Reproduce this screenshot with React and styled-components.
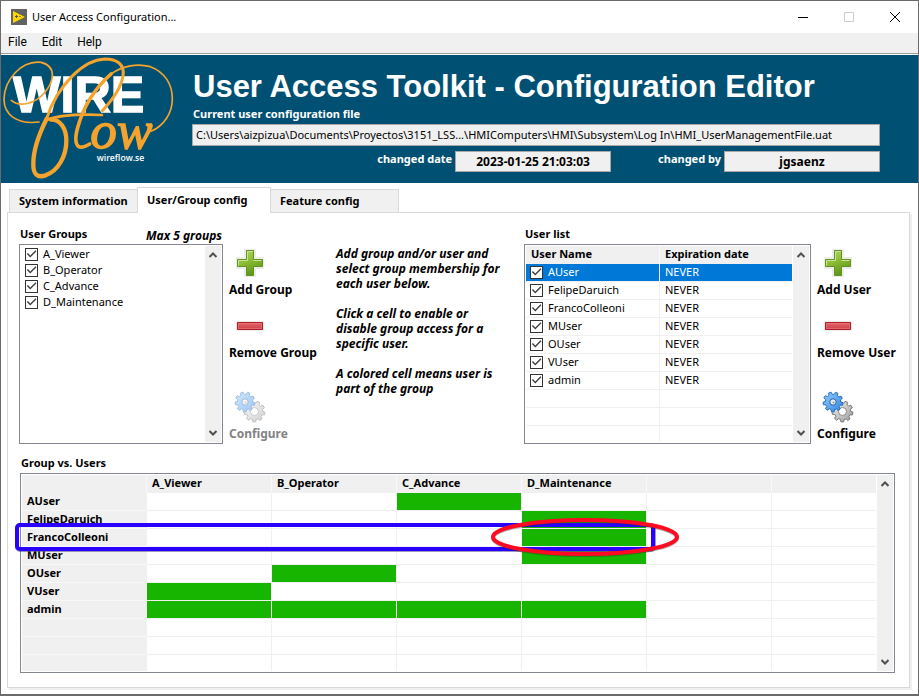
import React, { useState } from "react";
import styled, { createGlobalStyle, css } from "styled-components";

const Global = createGlobalStyle`
  *, *::before, *::after { box-sizing: border-box; }
  body {
    margin: 0;
    background: #ffffff;
    color: #000000;
    font-family: "Noto Sans", "Open Sans", sans-serif;
    font-size: 11px;
    line-height: 16px;
  }
  button, input { font: inherit; color: inherit; }
`;

const Window = styled.div`
  display: flex;
  flex-direction: column;
  min-height: 100vh;
  border: 1px solid #6b6b6b;
  border-bottom-width: 2px;
  background: #ffffff;
`;

const TitleBar = styled.header`
  display: flex;
  align-items: center;
  height: 32px;
  padding-left: 10px;
  gap: 5px;
`;

const WindowTitle = styled.h1`
  flex: 1;
  margin: 0;
  font-size: 11px;
  font-weight: 400;
`;

const WindowControls = styled.div`
  display: flex;
`;

const WindowButton = styled.button`
  width: 46px;
  height: 31px;
  padding: 0;
  border: 0;
  background: none;
  display: grid;
  place-items: center;
`;

const MenuBar = styled.nav`
  display: flex;
  gap: 1px;
  height: 21px;
  background: #f0f0f0;
  border-bottom: 1px solid #a0a0a0;
  margin-bottom: 1px;
`;

const MenuItem = styled.button`
  padding: 0 7px 2px;
  border: 0;
  background: none;
  font-size: 12px;
  font-family: Roboto, "Open Sans", sans-serif;
`;

const Banner = styled.section`
  display: flex;
  height: 128px;
  gap: 11px;
  padding-right: 38px;
  background: #005073;
  color: #ffffff;
`;

const BannerBody = styled.div`
  flex: 1;
  min-width: 0;
`;

const BannerTitle = styled.h2`
  margin: 14px 0 2px 1px;
  font: bold 31px/35px "Liberation Sans", Arial, sans-serif;
  white-space: nowrap;
`;

const BannerLabel = styled.label`
  display: block;
  padding-left: 1px;
  font-weight: 700;
`;

const Readout = styled.input`
  width: ${(p) => (p.$narrow ? "156px" : "100%")};
  height: ${(p) => (p.$narrow ? "21px" : "22px")};
  padding: 0 3px 1px;
  border: 1px solid #a7a7a7;
  background: #f0f0f0;
  color: #000000;
  ${(p) => p.$narrow && css`
    font-weight: 700;
    font-size: 12px;
    text-align: center;
  `}
`;

const PathLine = styled.div`
  margin-top: 2px;
  height: 27px;
`;

const ChangeLine = styled.div`
  display: flex;
  justify-content: flex-end;
  gap: 46px;
`;

const ChangeField = styled.div`
  display: flex;
  gap: 3px;
`;

const Tabs = styled.div`
  display: flex;
  align-items: flex-end;
  height: 29px;
  padding-left: 8px;
`;

const Tab = styled.button`
  height: 23px;
  width: 129px;
  padding: 0 9px;
  border: 1px solid #d9d9d9;
  border-bottom: 0;
  background: #f0f0f0;
  font-weight: 700;
  text-align: left;
  white-space: nowrap;
  ${(p) => p.$active && css`
    position: relative;
    width: 134px;
    height: 26px;
    margin: 0 -1px -1px;
    padding-bottom: 2px;
    background: #ffffff;
  `}
`;

const TabPanel = styled.main`
  flex: 1;
  margin: 0 8px 6px 6px;
  padding: 13px 14px 14px 11px;
  border: 1px solid #d9d9d9;
  box-shadow: 2px 2px 0 #f0f0f0;
`;

const Upper = styled.div`
  display: flex;
  align-items: stretch;
`;

const GroupSection = styled.section`
  width: 204px;
`;

const UserSection = styled.section`
  width: 287px;
`;

const SectionHead = styled.div`
  display: flex;
  justify-content: space-between;
  height: 18px;
  padding: 0 1px;
`;

const SectionTitle = styled.h3`
  margin: 0;
  font-size: 11px;
  font-weight: 700;
`;

const Limit = styled.em`
  padding-top: 2px;
  font-weight: 700;
  font-size: 12px;
`;

const Frame = styled.div`
  display: flex;
  padding: 1px;
  border: 1px solid #828790;
  background: #ffffff;
  ${(p) => p.$list && css`
    height: 200px;
  `}
`;

const CheckList = styled.ul`
  flex: 1;
  margin: 0;
  padding: 0 4px;
  list-style: none;
`;

const CheckLabel = styled.label`
  display: flex;
  align-items: center;
  gap: 5px;
`;

const CheckBox = styled.input`
  appearance: none;
  width: 13px;
  height: 13px;
  margin: 0;
  border: 1px solid #333333;
  background: #ffffff;
  &:checked::before {
    content: "";
    display: block;
    width: 11px;
    height: 11px;
    background: #404040;
    clip-path: polygon(8% 50%, 17% 41%, 39% 64%, 86% 16%, 95% 25%, 39% 82%);
  }
`;

const ScrollTrack = styled.div`
  display: flex;
  flex-direction: column;
  justify-content: space-between;
  width: 16px;
  background: #f0f0f0;
`;

const ScrollButton = styled.button`
  display: grid;
  place-items: center;
  width: 16px;
  height: 18px;
  padding: 0;
  border: 0;
  background: none;
`;

const Actions = styled.div`
  display: flex;
  flex-direction: column;
  align-items: flex-start;
  width: ${(p) => (p.$wide ? "92px" : "84px")};
  padding: 21px 0 0 6px;
`;

const ActionButton = styled.button`
  display: flex;
  flex-direction: column;
  align-items: flex-start;
  padding: 0;
  margin-top: ${(p) => p.$gap || 0}px;
  border: 0;
  background: none;
  font-weight: 700;
  font-size: 12px;
  white-space: nowrap;
  svg { margin: 0 0 3px 5px; }
  &:disabled { color: #838383; }
  &:disabled svg { opacity: 0.45; }
`;

const Help = styled.div`
  flex: 1;
  padding: 20px 0 0 21px;
  font-weight: 700;
  font-style: italic;
  font-size: 12px;
  line-height: 15px;
  white-space: pre-line;
`;

const HelpText = styled.p`
  margin: 0 0 15px;
`;

const UserTable = styled.table`
  flex: 1;
  border-collapse: separate;
  border-spacing: 0;
  table-layout: fixed;
  margin-right: 1px;
  height: 196px;
`;

const UserHead = styled.th`
  height: 18px;
  padding: 0 5px 2px;
  background: #f0f0f0;
  border-right: ${(p) => (p.$divided ? "1px solid #f8f8f8" : "0")};
  text-align: left;
`;

const UserCell = styled.td`
  height: 18px;
  padding: 0 5px 1px;
  border-bottom: 1px solid #f0f0f0;
  ${(p) => p.$divided && css`
    width: 134px;
    padding-left: 4px;
    border-right: 1px solid #f0f0f0;
  `}
  tr:last-child > & {
    height: 16px;
    border-bottom: 0;
  }
  ${(p) => p.$selected && css`
    background: #0078d7;
    background-clip: padding-box;
    color: #ffffff;
  `}
`;

const MatrixSection = styled.section`
  margin: 11px 0 0 1px;
`;

const MatrixArea = styled.div`
  position: relative;
`;

const Matrix = styled.table`
  flex: 1;
  border-collapse: separate;
  border-spacing: 0;
  table-layout: fixed;
  margin-right: 1px;
`;

const MatrixHead = styled.th`
  width: ${(p) => (p.$last ? "auto" : "125px")};
  height: 18px;
  padding: 0 5px 2px;
  background: #f0f0f0;
  border-right: ${(p) => (p.$last ? "0" : "1px solid #f8f8f8")};
  text-align: left;
`;

const RowHead = styled.th`
  height: 18px;
  padding: 0 5px 1px;
  background: #f0f0f0;
  border-bottom: 1px solid #f8f8f8;
  text-align: left;
  tr:last-child > & {
    height: 16px;
    border-bottom: 0;
  }
`;

const MatrixCell = styled.td`
  padding: 0;
  border-right: ${(p) => (p.$last ? "0" : "1px solid #f0f0f0")};
  border-bottom: 1px solid #f0f0f0;
  tr:last-child > & { border-bottom: 0; }
`;

const CellToggle = styled.button`
  display: block;
  width: 100%;
  height: 17px;
  padding: 0;
  border: 0;
  background: ${(p) => (p.$on ? "#18b500" : "#ffffff")};
  tr:last-child & { height: 16px; }
`;

const Highlight = styled.svg`
  position: absolute;
  left: -7px;
  top: 43px;
  pointer-events: none;
`;

function ArrowGlyph({ down }) {
  return (
    <svg width="8" height="6" viewBox="0 0 8 6" aria-hidden="true">
      <path d={down ? "M0.5 1L4 4.5L7.5 1" : "M0.5 5L4 1.5L7.5 5"} fill="none" stroke="#505050" strokeWidth="2" />
    </svg>
  );
}

function Scroller({ label }) {
  return (
    <ScrollTrack>
      <ScrollButton aria-label={`Scroll ${label} up`}><ArrowGlyph /></ScrollButton>
      <ScrollButton aria-label={`Scroll ${label} down`}><ArrowGlyph down /></ScrollButton>
    </ScrollTrack>
  );
}

function AppIcon() {
  return (
    <svg width="16" height="16" viewBox="0 0 16 16" aria-hidden="true">
      <path fill="#626262" d="M0 0h16v16H0z" />
      <path fill="#ffd500" d="M2 2L14 8L2 14z" />
      <path d="M4 7.500h3M5.500 6v3" stroke="#555555" />
      <path d="M8 7.500h2" stroke="#a28a20" />
    </svg>
  );
}

function AddIcon() {
  return (
    <svg width="32" height="32" viewBox="0 0 32 32" aria-hidden="true">
      <defs>
        <linearGradient id="leaf" x1="0" y1="0" x2="0.4" y2="1">
          <stop offset="0" stopColor="#b4db6b" />
          <stop offset="0.5" stopColor="#8fbd35" />
          <stop offset="1" stopColor="#5f971b" />
        </linearGradient>
      </defs>
      <path d="M11 3h10v8h8v10h-8v8H11v-8H3V11h8z" fill="none" stroke="#ececec" strokeWidth="2" />
      <path d="M12.500 3.500h7v9h9v7h-9v9h-7v-9h-9v-7h9z" fill="url(#leaf)" stroke="#5f9420" />
      <path d="M4.500 18.500v-5h9v-9h5M19.500 13.500h8" fill="none" stroke="#cbe598" />
    </svg>
  );
}

function RemoveIcon() {
  return (
    <svg width="32" height="32" viewBox="0 0 32 32" aria-hidden="true">
      <defs>
        <linearGradient id="brick" x1="0" y1="0" x2="0" y2="1">
          <stop offset="0" stopColor="#e4666b" />
          <stop offset="1" stopColor="#cc4147" />
        </linearGradient>
      </defs>
      <path d="M2.500 11.500h27v9h-27z" fill="none" stroke="#ececec" />
      <path d="M3.500 12.500h25v7h-25z" fill="url(#brick)" stroke="#b01a22" />
      <path d="M4.500 13.500h23v5h-23z" fill="none" stroke="#ea8084" strokeOpacity="0.6" />
    </svg>
  );
}

function gearPath(cx, cy, outer, inner, teeth) {
  const points = [];
  const step = (Math.PI * 2) / teeth;
  for (let i = 0; i < teeth; i += 1) {
    const a = i * step + 0.2;
    [[-0.31, inner], [-0.19, outer], [0.19, outer], [0.31, inner]].forEach(([t, r]) => {
      points.push(`${(cx + Math.cos(a + t * step) * r).toFixed(2)} ${(cy + Math.sin(a + t * step) * r).toFixed(2)}`);
    });
  }
  return `M${points.join("L")}Z`;
}

function GearsIcon() {
  return (
    <svg width="32" height="32" viewBox="0 0 32 32" aria-hidden="true">
      <defs>
        <linearGradient id="steel" x1="0" y1="0" x2="1" y2="1">
          <stop offset="0" stopColor="#f4f4f4" />
          <stop offset="1" stopColor="#9a9a9a" />
        </linearGradient>
        <linearGradient id="azure" x1="0" y1="0" x2="1" y2="1">
          <stop offset="0" stopColor="#9ad0ff" />
          <stop offset="1" stopColor="#2a83e2" />
        </linearGradient>
      </defs>
      <path d={gearPath(20.5, 20.5, 10.5, 8.2, 9)} fill="url(#steel)" stroke="#777777" strokeLinejoin="round" />
      <circle cx="20.500" cy="20.500" r="4" fill="#ffffff" stroke="#8a8a8a" />
      <path d={gearPath(11, 11, 10, 7.7, 9)} fill="url(#azure)" stroke="#2a70bd" strokeLinejoin="round" />
      <circle cx="11" cy="11" r="3.200" fill="#ececec" stroke="#2463a8" />
      <circle cx="11.500" cy="11.500" r="1" fill="#9a9a9a" />
    </svg>
  );
}

function Logo() {
  return (
    <svg width="180" height="128" viewBox="0 15 540 384" role="img" aria-label="WireFlow">
      <text x="36" y="185" fontFamily="Liberation Sans, Arial, sans-serif" fontWeight="700" fontSize="151" fill="#ffffff" stroke="#ffffff" strokeWidth="4">WIRE</text>
      <g fill="none" stroke="#f5a32c" strokeLinecap="round" strokeLinejoin="round">
        <path strokeWidth="5" d="M31 151C55 172 102 162 129 130C160 95 168 48 120 37C62 30 10 88 9 148C9 196 50 224 114 216" />
        <path strokeWidth="9" d="M136 208C152 158 180 112 215 77C246 46 280 28 312 27C346 27 372 42 366 78C360 114 336 148 304 182" />
        <path strokeWidth="13" d="M137 206C117 246 97 300 97 340C96 374 110 384 134 376C172 362 196 318 196 272C196 236 178 208 150 209" />
        <path strokeWidth="8" d="M136 210C174 196 230 192 303 195" />
        <path strokeWidth="11" d="M330 72C278 118 246 172 229 236C221 268 224 286 236 291C246 293 256 288 266 282" />
        <path strokeWidth="5" d="M330 72C366 46 410 40 448 50C492 66 514 104 514 146C514 190 488 228 450 244" />
      </g>
      <text x="268" y="293" fontFamily="Liberation Serif, Times New Roman, serif" fontStyle="italic" fontSize="160" fill="#f5a32c" stroke="#f5a32c" strokeWidth="4">ow</text>
      <text x="287" y="332" fontFamily="Open Sans, sans-serif" fontWeight="600" fontSize="26" fill="#ffffff">wireflow.se</text>
    </svg>
  );
}

const GROUPS = ["A_Viewer", "B_Operator", "C_Advance", "D_Maintenance"];
const USERS = ["AUser", "FelipeDaruich", "FrancoColleoni", "MUser", "OUser", "VUser", "admin"];
const MEMBERSHIP = {
  AUser: ["C_Advance"],
  FelipeDaruich: ["D_Maintenance"],
  FrancoColleoni: ["D_Maintenance"],
  MUser: ["D_Maintenance"],
  OUser: ["B_Operator"],
  VUser: ["A_Viewer"],
  admin: GROUPS,
};
const COLUMNS = [...GROUPS, "", ""];
const ROWS = [...USERS, "", "", ""];
const HELP = [
  "Add group and/or user and\nselect group membership for\neach user below.",
  "Click a cell to enable or\ndisable group access for a\nspecific user.",
  "A colored cell means user is\npart of the group",
];

function CheckItem({ name }) {
  return (
    <CheckLabel>
      <CheckBox type="checkbox" defaultChecked />
      {name}
    </CheckLabel>
  );
}

function ActionColumn({ noun, locked, wide }) {
  return (
    <Actions $wide={wide}>
      <ActionButton><AddIcon />Add {noun}</ActionButton>
      <ActionButton $gap={12}><RemoveIcon />Remove {noun}</ActionButton>
      <ActionButton $gap={30} disabled={locked}><GearsIcon />Configure</ActionButton>
    </Actions>
  );
}

function MembershipMatrix() {
  const [members, setMembers] = useState(MEMBERSHIP);
  const toggle = (user, group) => {
    if (!user || !group) return;
    setMembers((m) => ({
      ...m,
      [user]: m[user].includes(group) ? m[user].filter((g) => g !== group) : [...m[user], group],
    }));
  };
  const last = COLUMNS.length - 1;

  return (
    <Matrix>
      <thead>
        <tr>
          <MatrixHead />
          {COLUMNS.map((g, i) => <MatrixHead key={i} $last={i === last}>{g}</MatrixHead>)}
        </tr>
      </thead>
      <tbody>
        {ROWS.map((u, r) => (
          <tr key={r}>
            <RowHead>{u}</RowHead>
            {COLUMNS.map((g, c) => {
              const on = Boolean(u && members[u].includes(g));
              return (
                <MatrixCell key={c} $last={c === last}>
                  <CellToggle
                    $on={on}
                    aria-pressed={on}
                    aria-label={`${u || "Empty row"}, ${g || "empty column"}`}
                    onClick={() => toggle(u, g)}
                  />
                </MatrixCell>
              );
            })}
          </tr>
        ))}
      </tbody>
    </Matrix>
  );
}

export default function App() {
  return (
    <Window>
      <Global />
      <TitleBar>
        <AppIcon />
        <WindowTitle>User Access Configuration...</WindowTitle>
        <WindowControls>
          <WindowButton aria-label="Minimize">
            <svg width="10" height="10"><path d="M0 5.500h10" stroke="#000000" /></svg>
          </WindowButton>
          <WindowButton aria-label="Maximize" disabled>
            <svg width="10" height="10"><path d="M0.500 0.500h9v9h-9z" fill="none" stroke="#cccccc" /></svg>
          </WindowButton>
          <WindowButton aria-label="Close">
            <svg width="10" height="10"><path d="M0 0l10 10M10 0l-10 10" stroke="#000000" /></svg>
          </WindowButton>
        </WindowControls>
      </TitleBar>
      <MenuBar>
        <MenuItem>File</MenuItem>
        <MenuItem>Edit</MenuItem>
        <MenuItem>Help</MenuItem>
      </MenuBar>
      <Banner>
        <Logo />
        <BannerBody>
          <BannerTitle>User Access Toolkit - Configuration Editor</BannerTitle>
          <BannerLabel htmlFor="path">Current user configuration file</BannerLabel>
          <PathLine>
            <Readout
              id="path"
              readOnly
              value="C:\Users\aizpizua\Documents\Proyectos\3151_LSS...\HMIComputers\HMI\Subsystem\Log In\HMI_UserManagementFile.uat"
            />
          </PathLine>
          <ChangeLine>
            <ChangeField>
              <BannerLabel htmlFor="date">changed date</BannerLabel>
              <Readout $narrow id="date" readOnly value="2023-01-25 21:03:03" />
            </ChangeField>
            <ChangeField>
              <BannerLabel htmlFor="author">changed by</BannerLabel>
              <Readout $narrow id="author" readOnly value="jgsaenz" />
            </ChangeField>
          </ChangeLine>
        </BannerBody>
      </Banner>
      <Tabs role="tablist">
        <Tab role="tab" aria-selected="false">System information</Tab>
        <Tab role="tab" aria-selected="true" $active>User/Group config</Tab>
        <Tab role="tab" aria-selected="false">Feature config</Tab>
      </Tabs>
      <TabPanel>
        <Upper>
          <GroupSection>
            <SectionHead>
              <SectionTitle>User Groups</SectionTitle>
              <Limit>Max 5 groups</Limit>
            </SectionHead>
            <Frame $list>
              <CheckList>
                {GROUPS.map((g) => <li key={g}><CheckItem name={g} /></li>)}
              </CheckList>
              <Scroller label="groups" />
            </Frame>
          </GroupSection>
          <ActionColumn noun="Group" locked wide />
          <Help>
            {HELP.map((t) => <HelpText key={t}>{t}</HelpText>)}
          </Help>
          <UserSection>
            <SectionHead><SectionTitle>User list</SectionTitle></SectionHead>
            <Frame $list>
              <UserTable>
                <thead>
                  <tr><UserHead $divided>User Name</UserHead><UserHead>Expiration date</UserHead></tr>
                </thead>
                <tbody>
                  {ROWS.map((u, i) => (
                    <tr key={i}>
                      <UserCell $divided $selected={i === 0}>{u && <CheckItem name={u} />}</UserCell>
                      <UserCell $selected={i === 0}>{u && "NEVER"}</UserCell>
                    </tr>
                  ))}
                </tbody>
              </UserTable>
              <Scroller label="users" />
            </Frame>
          </UserSection>
          <ActionColumn noun="User" />
        </Upper>
        <MatrixSection>
          <SectionHead><SectionTitle>Group vs. Users</SectionTitle></SectionHead>
          <MatrixArea>
            <Frame>
              <MembershipMatrix />
              <Scroller label="matrix" />
            </Frame>
            <Highlight width="680" height="44" viewBox="0 0 680 44" aria-hidden="true">
              <rect x="4" y="9" width="637" height="25" rx="3" fill="none" stroke="#55559c" strokeOpacity="0.6" strokeWidth="4" />
              <rect x="4" y="9" width="636" height="24" rx="3" fill="none" stroke="#2a00ff" strokeWidth="4" />
              <ellipse cx="572" cy="22" rx="92" ry="17" fill="none" stroke="#303030" strokeOpacity="0.4" strokeWidth="4" />
              <ellipse cx="572" cy="21" rx="92" ry="17" fill="none" stroke="#ff0a20" strokeWidth="4" />
            </Highlight>
          </MatrixArea>
        </MatrixSection>
      </TabPanel>
    </Window>
  );
}
